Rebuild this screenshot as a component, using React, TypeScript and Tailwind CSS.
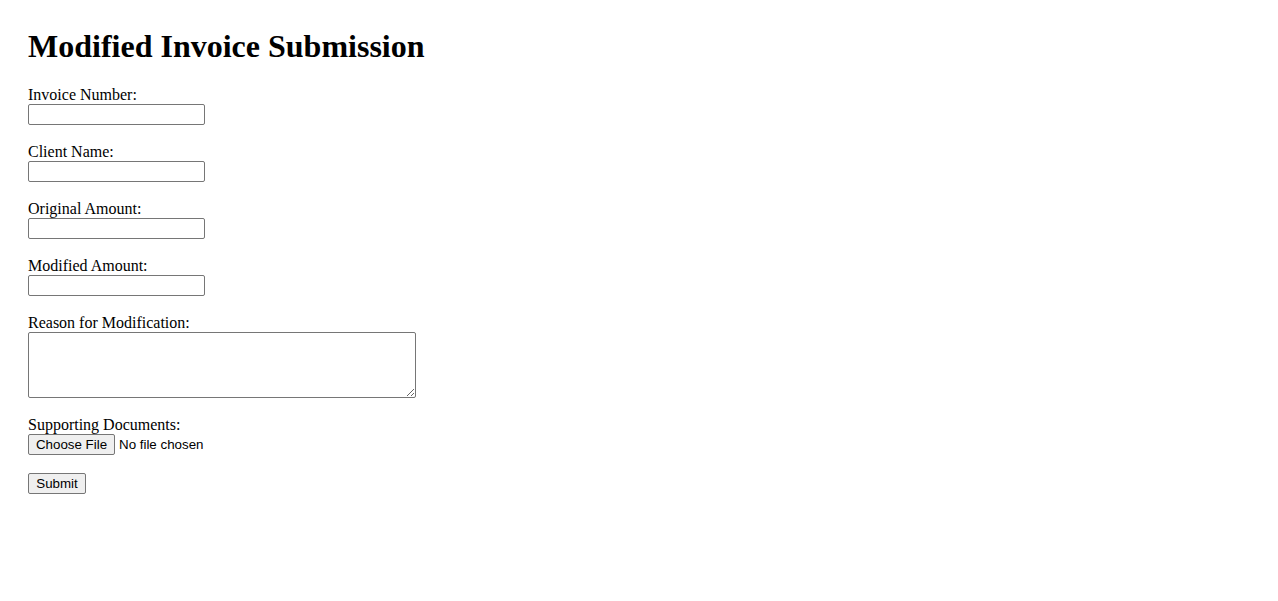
import React from "react";

const labelCls = "block font-['Liberation_Serif',serif] text-[16px] leading-[18px] text-black";
const inputCls = "block w-[177px] h-[21px] border border-[#767676] rounded-[2px] bg-white px-[2px] font-['Liberation_Sans',Arial,sans-serif] text-[13.33px] outline-none";
const btnCls = "flex items-center justify-center h-[21px] border border-[#767676] rounded-[2px] bg-[#efefef] font-['Liberation_Sans',Arial,sans-serif] text-[13.33px] leading-[15px] text-black";

export default function App() {
  return (
    <div className="min-h-[601px] bg-white pl-[28px] pt-[28px] font-['Liberation_Serif',serif] text-black">
      <h1 className="text-[32px] font-bold leading-[37px] mb-[21px]">Modified Invoice Submission</h1>
      <form className="flex flex-col gap-[18px]" onSubmit={(e) => e.preventDefault()}>
        <div>
          <label className={labelCls}>Invoice Number:</label>
          <input type="text" className={inputCls} />
        </div>
        <div>
          <label className={labelCls}>Client Name:</label>
          <input type="text" className={inputCls} />
        </div>
        <div>
          <label className={labelCls}>Original Amount:</label>
          <input type="text" className={inputCls} />
        </div>
        <div>
          <label className={labelCls}>Modified Amount:</label>
          <input type="text" className={inputCls} />
        </div>
        <div>
          <label className={labelCls}>Reason for Modification:</label>
          <textarea className="block w-[388px] h-[66px] border border-[#767676] rounded-[2px] bg-white resize outline-none" />
        </div>
        <div>
          <label className={labelCls}>Supporting Documents:</label>
          <div className="flex items-center h-[21px]">
            <button type="button" className={btnCls + " w-[87px]"}>Choose File</button>
            <span className="ml-[4px] font-['Liberation_Sans',Arial,sans-serif] text-[13.33px] leading-[15px]">No file chosen</span>
          </div>
        </div>
        <div>
          <button type="submit" className={btnCls + " w-[58px]"}>Submit</button>
        </div>
      </form>
    </div>
  );
}
